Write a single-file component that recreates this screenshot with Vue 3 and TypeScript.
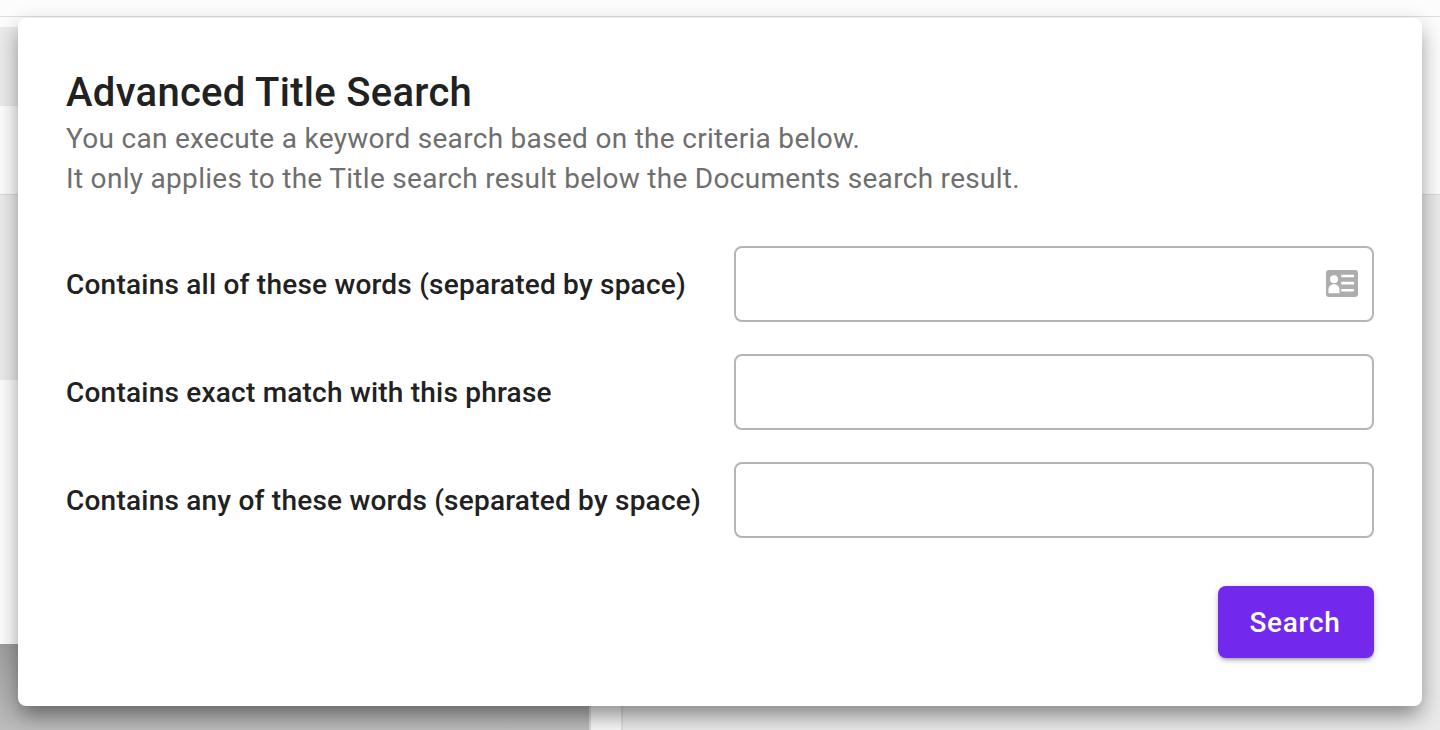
<template>
  <div class="page">
    <div class="backdrop">
      <div class="top-bar"></div>
      <div class="bg-columns">
        <div class="col-left">
          <div class="band light gap"></div>
          <div class="band grey h79"></div>
          <div class="band light h88"></div>
          <div class="band grey h185"></div>
          <div class="band light h264"></div>
          <div class="band dark"></div>
        </div>
        <div class="col-mid"></div>
        <div class="col-right">
          <div class="band soft"></div>
          <div class="band rest"></div>
        </div>
      </div>
    </div>

    <div class="modal">
      <h2 class="title">Advanced Title Search</h2>
      <p class="desc">You can execute a keyword search based on the criteria below.<br />It only applies to the Title search result below the Documents search result.</p>

      <form class="fields" @submit.prevent>
        <div v-for="field in fields" :key="field.label" class="field">
          <label class="label">{{ field.label }}</label>
          <div class="input-box">
            <svg v-if="field.icon" class="card-icon" viewBox="0 0 32 27" aria-hidden="true">
              <path fill="#adadad" fill-rule="evenodd" d="M3 0h26a3 3 0 0 1 3 3v21a3 3 0 0 1-3 3H3a3 3 0 0 1-3-3V3a3 3 0 0 1 3-3zM8 5.300a4 4 0 1 0 0 8 4 4 0 0 0 0-8zM8 14.300c-3.200 0-5.500 2.300-5.500 5.200v3.800h11v-3.800c0-2.900-2.300-5.200-5.500-5.200zM15.300 4.700v2.600H28V4.700zM15.300 11.800v2.600H28v-2.600zM15.300 19v2.600H28V19z" />
            </svg>
          </div>
        </div>
      </form>

      <div class="actions">
        <button class="search-btn" type="button">Search</button>
      </div>
    </div>
  </div>
</template>

<script setup lang="ts">
const fields = [
  { label: 'Contains all of these words (separated by space)', icon: true },
  { label: 'Contains exact match with this phrase', icon: false },
  { label: 'Contains any of these words (separated by space)', icon: false },
]
</script>

<style>
html, body { margin: 0; height: 100%; overflow: hidden; }
</style>

<style scoped>
.page {
  position: relative;
  width: 1440px;
  height: 730px;
  overflow: hidden;
  font-family: Roboto, "Liberation Sans", sans-serif;
  background: #fff;
}
.backdrop {
  position: absolute;
  inset: 0;
  display: flex;
  flex-direction: column;
}
.top-bar {
  height: 17px;
  box-sizing: border-box;
  background: #fcfcfc;
  border-bottom: 1px solid #dcdcdc;
}
.bg-columns {
  flex: 1;
  display: flex;
}
.col-left {
  width: 589px;
  display: flex;
  flex-direction: column;
}
.col-mid {
  width: 34px;
  margin-top: 20px;
  box-sizing: border-box;
  background: #f6f6f6;
  border-left: 2px solid #d8d8d8;
  border-right: 2px solid #dcdcdc;
}
.col-right {
  flex: 1;
  display: flex;
  flex-direction: column;
}
.band { flex: none; }
.gap { height: 10px; }
.h79 { height: 79px; }
.h88 { height: 88px; border-bottom: 1px solid #d8d8d8; }
.h185 { height: 185px; }
.h264 { height: 264px; }
.light { background: #fcfcfc; }
.grey { background: #eaeaea; }
.dark {
  flex: 1;
  background: linear-gradient(180deg, #9e9e9e, #bcbcbc);
}
.soft {
  height: 177px;
  background: #fcfcfc;
  border-bottom: 1px solid #d8d8d8;
}
.rest {
  flex: 1;
  background: #e9e9e9;
}

.modal {
  position: absolute;
  left: 18px;
  top: 18px;
  width: 1404px;
  height: 688px;
  box-sizing: border-box;
  padding: 49px 48px 48px;
  background: #fff;
  border-radius: 8px;
  box-shadow: 0 12px 20px -4px rgba(0, 0, 0, 0.3), 0 8px 24px rgba(0, 0, 0, 0.2);
  display: flex;
  flex-direction: column;
}
.title {
  margin: 0;
  font-size: 40px;
  line-height: 52px;
  font-weight: 500;
  letter-spacing: 0.3px;
  color: #212121;
}
.desc {
  margin: 0;
  font-size: 28px;
  line-height: 40px;
  font-weight: 400;
  letter-spacing: 0.3px;
  color: #6e6e6e;
}
.fields {
  margin-top: 47px;
  display: flex;
  flex-direction: column;
  gap: 32px;
}
.field {
  display: grid;
  grid-template-columns: 668px 640px;
  align-items: center;
}
.label {
  font-size: 28px;
  font-weight: 500;
  letter-spacing: 0.22px;
  color: #212121;
  white-space: nowrap;
}
.input-box {
  position: relative;
  height: 76px;
  box-sizing: border-box;
  border: 2px solid #b5b5b5;
  border-radius: 8px;
  background: #fff;
}
.card-icon {
  position: absolute;
  right: 14px;
  top: 22px;
  width: 32px;
  height: 27px;
}
.actions {
  margin-top: 48px;
  display: flex;
  justify-content: flex-end;
}
.search-btn {
  width: 156px;
  height: 72px;
  padding: 0 2px 0 0;
  border: 0;
  border-radius: 8px;
  background: #7329ec;
  color: #fff;
  font-family: inherit;
  font-size: 28px;
  font-weight: 500;
  letter-spacing: 0.7px;
  box-shadow: 0 3px 3px -2px rgba(0, 0, 0, 0.2), 0 3px 4px rgba(0, 0, 0, 0.14), 0 1px 8px rgba(0, 0, 0, 0.12);
}
</style>
